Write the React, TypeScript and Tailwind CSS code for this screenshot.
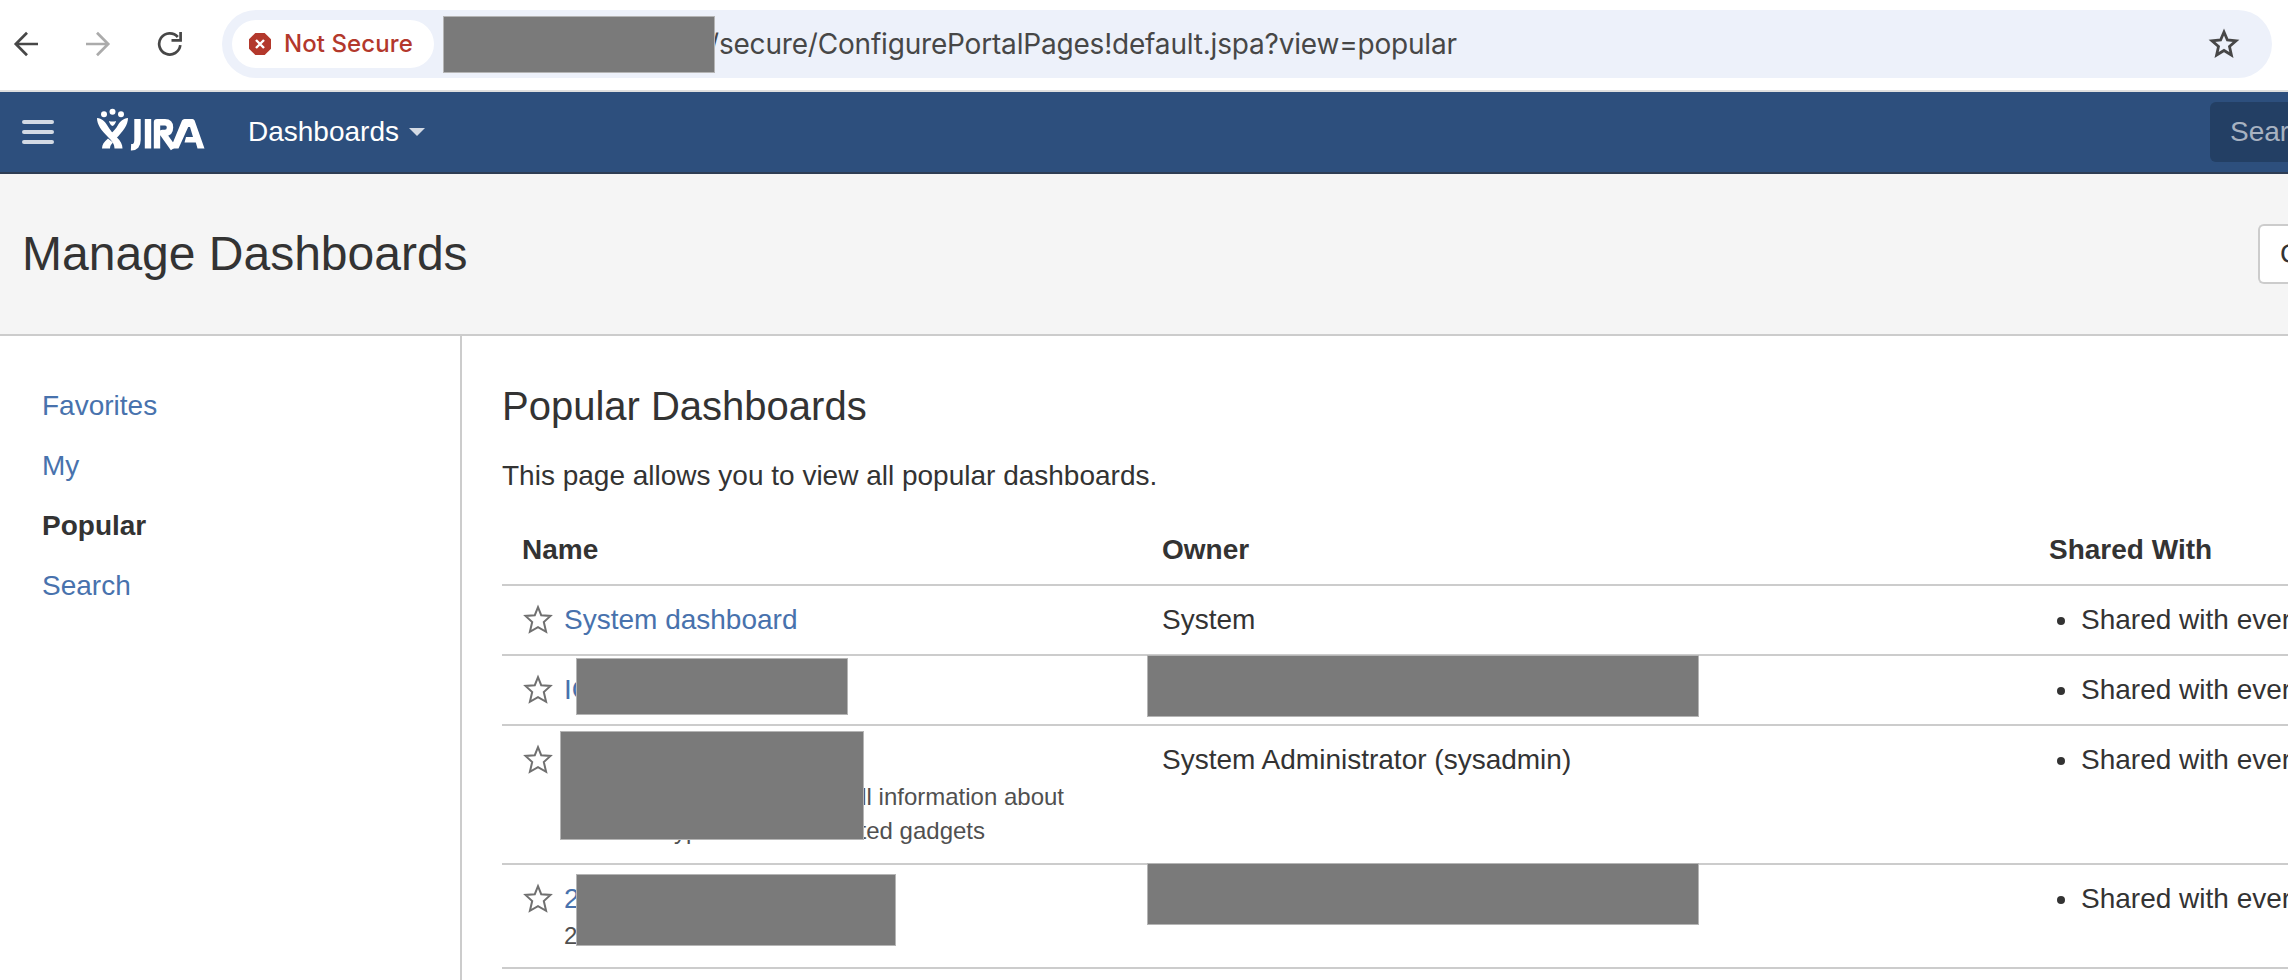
import React from "react";

const REGULAR = "font-['Liberation_Sans',Arial,sans-serif]";

function Star({ className }: { className?: string }) {
  return (
    <svg className={className} viewBox="0 0 32 32" fill="none" stroke="#707070" strokeWidth="2">
      <path d="M16 4.2 L19.2 12.2 L28.500 12.900 L21.800 19 L24.100 28.800 L16 24.200 L7.900 28.800 L10.200 19 L3.500 12.900 L12.800 12.200 Z" />
    </svg>
  );
}

function Redaction({ className }: { className: string }) {
  return <span className={"absolute border border-[#b5b5b5] bg-[#7a7a7a] " + className} />;
}

function BrowserBar() {
  return (
    <div className="flex h-[92px] items-start border-b-2 border-[#dedfdf] bg-white">
      <div className="flex h-[88px] w-[222px] shrink-0 items-center">
        <svg className="ml-[13px] size-[26px]" viewBox="0 0 26 26" fill="none" stroke="#474747" strokeWidth="2.7">
          <path d="M25 13H3M14 1.8 2.8 13 14 24.2" />
        </svg>
        <svg className="ml-[46px] size-[26px]" viewBox="0 0 26 26" fill="none" stroke="#ababab" strokeWidth="2.7">
          <path d="M1 13H23M12 1.8 23.2 13 12 24.2" />
        </svg>
        <svg className="ml-[46px] size-[26px]" viewBox="0 0 26 26" fill="none" stroke="#474747" strokeWidth="2.7">
          <path d="M23.3 14.2A10.600 10.600 0 1 1 20.800 6" />
          <path d="M23.600 1V9.400H14.500" />
        </svg>
      </div>
      <div className="relative mt-[10px] flex h-[68px] w-[2050px] items-center rounded-full bg-[#edf1fa] font-[Inter,sans-serif]">
        <div className="ml-[10px] flex h-12 w-[202px] items-center rounded-full bg-white pl-4">
          <svg className="size-6" viewBox="0 0 24 24">
            <path d="M7.3 1h9.4L23 7.3v9.4L16.7 23H7.3L1 16.7V7.3z" fill="#b3382c" />
            <path d="M8 8l8 8M16 8l-8 8" stroke="#fff" strokeWidth="2.4" />
          </svg>
          <span className="ml-[12px] text-[24px] font-medium tracking-[0.08px] whitespace-nowrap text-[#b3382c]">Not Secure</span>
        </div>
        <span className="ml-[275px] text-[28px] tracking-[-0.19px] whitespace-nowrap text-[#474747]">/secure/ConfigurePortalPages!default.jspa?view=popular</span>
        <Redaction className="top-[6px] left-[221px] h-[57px] w-[272px]" />
        <svg className="absolute top-[17px] left-[1985px] size-[34px]" viewBox="0 0 34 34" fill="none" stroke="#474747" strokeWidth="2.8">
          <path d="M17 5 L20.4 13 L29 13.8 L22.5 19.5 L24.4 28 L17 23.5 L9.6 28 L11.5 19.5 L5 13.8 L13.6 13 Z" />
        </svg>
      </div>
    </div>
  );
}

function JiraLogo() {
  return (
    <svg className="ml-[42px] h-11 w-[110px] overflow-visible" viewBox="0 0 110 44" fill="#fff">
      <circle cx="8" cy="4.2" r="3" />
      <circle cx="16.5" cy="1.8" r="3" />
      <circle cx="25" cy="4.2" r="3" />
      <path d="M1 8C6 8.500 8.500 11 11 15C14 20 17 23.500 21 27.500C24.500 31 26.500 34 26.500 38.500H18.500C18.500 34 16 31 12 27C5.500 20.500 1 15 1 8Z" />
      <path d="M32 8C27 8.500 24.500 11 22 15C20 18.500 18 20.500 15 23.500L20 28.500C27 21.500 32 15 32 8Z" />
      <path d="M12 28.500C8 32 6 34.500 6 38.500H14C14 36 15 34.500 17 32.500Z" />
      <path d="M13 11C15.500 11.800 17.500 11.800 20 11C19.500 13.500 18.500 15 16.500 16C14.500 15 13.500 13.500 13 11Z" />
      <g fill="none" stroke="#fff" strokeWidth="6.400">
        <path d="M41.500 9V30Q41.500 37.500 35 37.200" />
        <path d="M52 9V38.500" />
        <path d="M61 38.500V12.200H69Q74 12.200 74 17.500T69 23H66.500L77.500 38.500" strokeLinejoin="round" />
      </g>
      <path d="M74.500 38.500 86 10.500Q86.800 9 88.500 9H96.500Q98 9 98.600 10.500L108.500 38.500H101.500L99.800 32.500H88.500L90 27H97L94 17H92.200L82.500 38.500Z" />
    </svg>
  );
}

function AppHeader() {
  return (
    <header className="flex h-[82px] items-center overflow-hidden border-b-2 border-[#2e3d54] bg-[#2d4f7d] text-[28px]">
      <div className="ml-[22px] flex w-8 shrink-0 flex-col gap-[6px]">
        <span className="h-1 rounded-full bg-[#d3dae4]" />
        <span className="h-1 rounded-full bg-[#d3dae4]" />
        <span className="h-1 rounded-full bg-[#d3dae4]" />
      </div>
      <JiraLogo />
      <span className="ml-[42px] w-[161px] leading-10 text-white">Dashboards</span>
      <svg className="h-2 w-4" viewBox="0 0 16 8">
        <path d="M0 0H16L8 8Z" fill="#d3dae4" />
      </svg>
      <div className="ml-auto flex h-[60px] w-[78px] items-center overflow-hidden rounded-l-md bg-[#233f64] pl-5 whitespace-nowrap text-[#a7b2c1]">Sear</div>
    </header>
  );
}

function PageHeader() {
  return (
    <div className="flex h-[162px] items-center justify-between overflow-hidden border-b-2 border-[#ccc] bg-[#f5f5f5] pl-[22px]">
      <h1 className="text-[48px] leading-[60px]">Manage Dashboards</h1>
      <button className="flex h-[60px] w-[30px] items-center overflow-hidden rounded-l-md border-2 border-r-0 border-[#ccc] bg-white pl-5 text-[28px]">C</button>
    </div>
  );
}

const NAV = ["Favorites", "My", "Popular", "Search"];

function Sidebar() {
  return (
    <nav className="w-[462px] shrink-0 border-r-2 border-[#ccc] pt-10">
      {NAV.map((item) => (
        <a
          key={item}
          className={"block py-[10px] pl-[42px] leading-10 " + (item === "Popular" ? "font-bold" : "text-[#4872ad]")}
        >
          {item}
        </a>
      ))}
    </nav>
  );
}

const COLUMNS = "grid grid-cols-[640px_887px_259px] border-b-2 border-[#ccc]";

function Row({ height, name, owner }: { height: string; name: React.ReactNode; owner: React.ReactNode }) {
  return (
    <div className={COLUMNS + " " + height}>
      <div className="relative flex pt-[14px] pl-5">
        <Star className="mt-[3px] size-8 shrink-0" />
        <div className="ml-[10px]">{name}</div>
      </div>
      <div className="relative pt-[14px] pl-5">{owner}</div>
      <div className="flex items-start pt-[14px] pl-[28px]">
        <span className="mt-[17px] size-2 shrink-0 rounded-full bg-[#333]" />
        <span className="ml-[16px] whitespace-nowrap">Shared with ever</span>
      </div>
    </div>
  );
}

function Content() {
  return (
    <main className="min-w-0 flex-1 pt-10 pl-10">
      <h2 className="text-[40px] leading-[60px]">Popular Dashboards</h2>
      <p className="mt-5">This page allows you to view all popular dashboards.</p>
      <div className="mt-5">
        <div className={COLUMNS + " h-[70px] pt-[14px] font-bold"}>
          <span className="pl-5">Name</span>
          <span className="pl-5">Owner</span>
          <span className="pl-5">Shared With</span>
        </div>
        <Row height="h-[70px]" name={<a className="text-[#4872ad]">System dashboard</a>} owner="System" />
        <Row
          height="h-[70px]"
          name={
            <>
              <a className="text-[#4872ad]">IG</a>
              <Redaction className="top-[2px] left-[74px] h-[57px] w-[272px]" />
            </>
          }
          owner={<Redaction className="top-[-1px] left-[5px] h-[62px] w-[552px]" />}
        />
        <Row
          height="h-[139px]"
          name={
            <>
              <div className="mt-10 flex h-[34px] w-[500px] justify-end text-[24px] leading-[34px] text-[#505050]">ll information about</div>
              <div className="flex h-[34px] w-[421px] justify-between pl-[110px] text-[24px] leading-[34px] text-[#505050]">
                <span>yp</span>
                <span>ted gadgets</span>
              </div>
              <Redaction className="top-[5px] left-[58px] h-[109px] w-[304px]" />
            </>
          }
          owner="System Administrator (sysadmin)"
        />
        <Row
          height="h-[104px]"
          name={
            <>
              <a className="block text-[#4872ad]">2</a>
              <div className="text-[24px] leading-[34px] text-[#505050]">2</div>
              <Redaction className="top-[9px] left-[74px] h-[72px] w-[320px]" />
            </>
          }
          owner={<Redaction className="top-[-2px] left-[5px] h-[62px] w-[552px]" />}
        />
      </div>
    </main>
  );
}

export default function App() {
  return (
    <div className={REGULAR + " flex h-[980px] w-[2288px] flex-col overflow-hidden bg-white text-[28px] leading-10 text-[#333]"}>
      <BrowserBar />
      <AppHeader />
      <PageHeader />
      <div className="flex flex-1">
        <Sidebar />
        <Content />
      </div>
    </div>
  );
}
